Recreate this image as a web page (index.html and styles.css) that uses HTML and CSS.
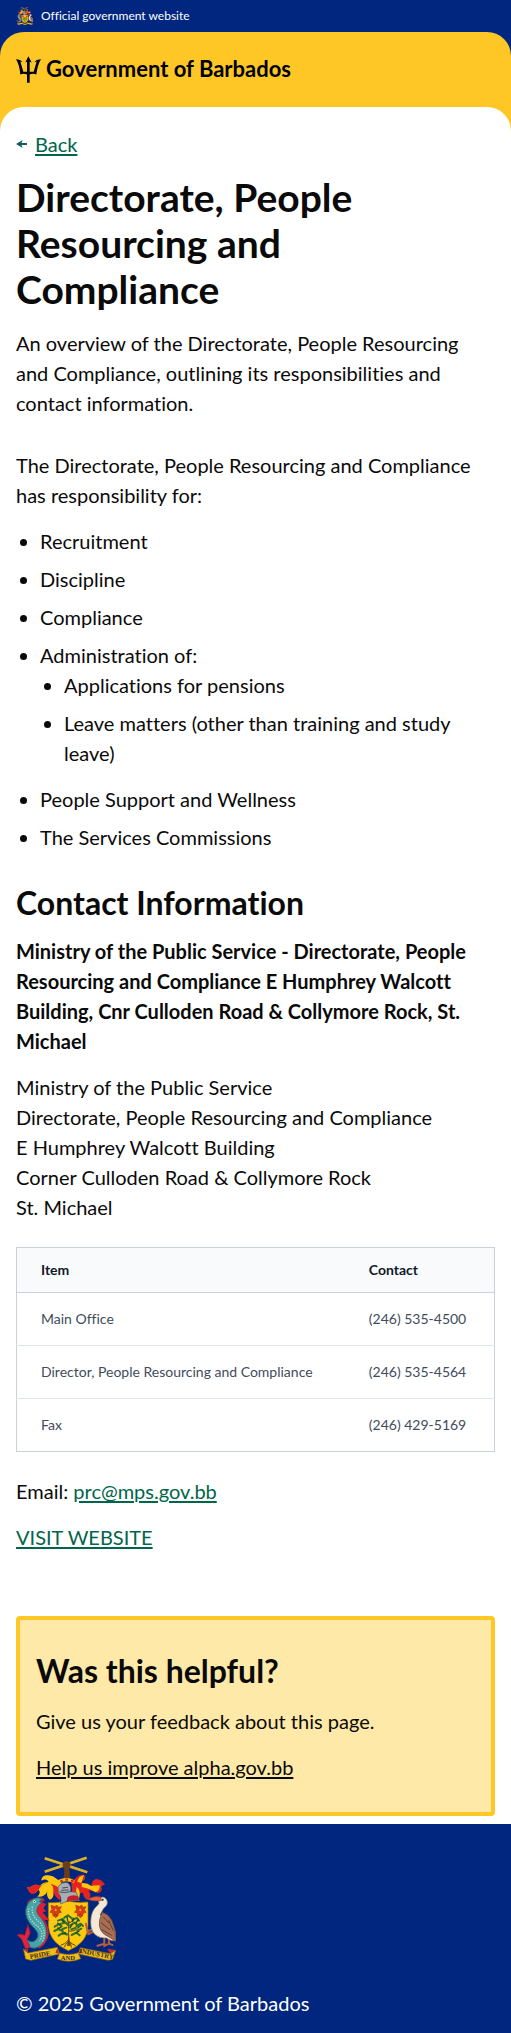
FILE: index.html
```html
<!DOCTYPE html>
<html lang="en">
<head>
<meta charset="utf-8">
<meta name="viewport" content="width=device-width, initial-scale=1">
<title>Directorate, People Resourcing and Compliance</title>
<link rel="stylesheet" href="styles.css">
</head>
<body>
<svg class="symbols" aria-hidden="true">
  <symbol id="crest" viewBox="48 50 300 318">
    <!-- crossed sugar cane and hand -->
    <path d="M134 97 260 55M134 57 262 99" stroke="#e0b423" stroke-width="8"/>
    <path d="M136 96 258 56M137 60 259 98" stroke="#6b5110" stroke-width="2" stroke-dasharray="1 9"/>
    <path d="M191 120 193 90Q184 80 190 69L198 65 209 68Q215 76 208 88L210 120Z" fill="#6a3e1d"/>
    <!-- mantling -->
    <path d="M184 128C166 118 160 105 137 108Q124 112 124 124Q139 116 146 128Q128 128 120 140Q104 132 94 142L81 144Q92 161 105 162L116 151Q124 160 112 172Q132 175 142 157Q138 170 149 181Q163 177 160 158Q171 166 184 157Z" fill="#fcc60c"/>
    <path d="M145 128Q126 132 116 151L105 162Q88 170 81 144L94 142Q104 130 120 140ZM151 133Q162 140 160 158Q166 174 180 183L183 151Q170 137 151 133Z" fill="#e32423"/>
    <path d="M214 128C231 118 231 104 252 107Q258 110 254 121Q248 124 244 131Q262 130 274 140Q274 123 288 119Q307 119 315 137Q299 138 306 149Q301 165 287 159Q274 153 266 154Q279 174 261 181Q249 174 249 160Q232 160 235 181L217 177Z" fill="#e32423"/>
    <path d="M252 107Q235 111 232 127L244 131ZM245 143Q264 146 287 159Q300 155 299 138Q280 138 274 140Q262 130 245 131ZM230 143Q244 151 237 179L226 174Z" fill="#fcc60c"/>
    <path d="M174 122Q200 109 224 123L222 131Q198 121 175 131Z" fill="#fcc60c"/>
    <path d="M181 125h7m8-4h8m9 4h8" stroke="#e32423" stroke-width="7"/>
    <!-- shield -->
    <path d="M145 190Q168 192 200 185Q234 192 264 188V258Q264 310 205 334Q148 310 145 258Z" fill="#fcc90e" stroke="#9a7411" stroke-width="2"/>
    <!-- helmet -->
    <path d="M174 143Q184 126 205 131Q216 144 211 157L229 159 238 184Q206 181 182 194Q186 172 175 161Z" fill="#a9adb4" stroke="#555b63" stroke-width="2"/>
    <path d="M178 158Q194 162 211 157M186 146l18-2M184 153l22-1" fill="none" stroke="#4b5059" stroke-width="3"/>
    <path d="M203 173Q218 164 234 171L238 184Q211 181 199 188Z" fill="#c5202a"/>
    <!-- flowers -->
    <g id="flower" fill="#df3b18" stroke="#9e3213" stroke-width="2">
      <path d="M153 198l12 4 5-5 6 7 8-2-5 9 5 8-8 2-3 9-7-5-7 6-1-11-8-1 6-9ZM162 230l5-8 6 8-6 5Z"/>
      <circle cx="167" cy="212" r="5" fill="#f4a01c"/>
    </g>
    <use href="#flower" x="74"/>
    <!-- bearded fig tree -->
    <path d="M201 320Q208 285 202 246L209 245Q204 284 212 319Z" fill="#68461a"/>
    <path d="M205 302Q195 315 182 318M205 304Q216 315 227 319M204 308Q195 316 193 324M207 307Q215 316 214 325M205 285Q184 278 172 263M206 275Q227 278 238 260M205 257Q188 252 182 239M206 251Q223 246 226 237" fill="none" stroke="#68461a" stroke-width="3"/>
    <path d="M164 262l13-8 8 7M163 275l12-6 13 6M176 289l12-8 13 5M215 287l14-7 10 8M232 274l12-6M229 261l13-8 7 7M174 244l14-5 6 8M193 235l11-7 10 8M217 241l14-5 6 8M183 253l14-4 8 9M211 259l12-9 10 7M187 269l12-4M214 270l12-4" fill="none" stroke="#2f7130" stroke-width="6" stroke-linejoin="round" stroke-linecap="round"/>
    <path d="M172 250l8 8m5-18 8 9m8-18 2 14m17-10-3 13m18-8-8 12m16 6-10 8m-49-4-11 7m43-14-7 12m29 8-12 7m-41 2 13-4" stroke="#174f2b" stroke-width="4"/>
    <!-- dolphin fish -->
    <path d="M81 190Q91 174 113 176Q131 171 134 185L124 188 139 194 130 207 139 216 128 219 149 244 123 239 132 257 117 252Q92 234 99 205Z" fill="#d91f35"/>
    <path d="M100 179Q117 170 127 181L118 186 126 191Q105 204 113 223Q139 249 141 280Q139 315 111 325Q92 331 79 315Q68 304 71 287Q92 319 108 301Q124 286 98 262Q75 239 77 212Q80 189 100 179Z" fill="#47a4a6" stroke="#235c74" stroke-width="3"/>
    <path d="M87 207Q79 236 112 260Q136 280 118 305M97 202Q93 230 120 250Q140 275 128 306" fill="none" stroke="#c8ddd0" stroke-width="4" stroke-dasharray="4 4"/>
    <path d="M126 192Q107 205 114 223Q142 249 144 280Q141 312 116 325" fill="none" stroke="#d91f35" stroke-width="5"/>
    <path d="M51 286Q64 282 74 288L84 255 91 281 81 301 91 325 76 328 65 300Z" fill="#dd2440" stroke="#8c1933" stroke-width="2"/>
    <circle cx="103" cy="187" r="4" fill="#fff"/><circle cx="103" cy="187" r="2" fill="#111"/>
    <!-- pelican -->
    <path d="M283 276 265 284 257 251M265 275l16-6M313 291v22l-23 7M326 290l1 23-17 8M327 313l13 5" fill="none" stroke="#b65f3c" stroke-width="6"/>
    <path d="M295 181Q309 165 320 181Q327 195 311 207L300 227Q349 238 348 305Q331 305 319 296Q280 297 273 262Q269 229 283 208L297 193Z" fill="#f4e8d7" stroke="#8e7260" stroke-width="2"/>
    <path d="M306 219Q345 227 348 306L325 292Q292 277 299 241Z" fill="#a66d51" stroke="#614136" stroke-width="2"/>
    <path d="M310 233l17 18m-24-1 27 21m-25 0 30 17m-9-45 14 31" stroke="#623f36" stroke-width="3"/>
    <path d="M262 180Q282 168 302 173L304 184Q281 187 262 180Z" fill="#e66239" stroke="#9d402c" stroke-width="2"/>
    <circle cx="308" cy="181" r="3" fill="#223"/>
    <!-- ribbon -->
    <path d="M70 329 84 341 172 324 178 341Q206 350 236 340L241 325 331 343 347 332 338 360 325 363 236 344 242 358Q207 373 172 359L178 344 93 363 77 359Z" fill="#efbd18" stroke="#8c681b" stroke-width="2"/>
    <path d="M172 325 178 344 166 340ZM241 325 247 340 236 344ZM70 329 84 341 84 330ZM331 343 347 332 322 328Z" fill="#c5302a"/>
  </symbol>
</svg>

<div class="official">
  <svg class="official-crest" aria-hidden="true"><use href="#crest"/></svg>
  <span>Official government website</span>
</div>

<div class="masthead-back">
  <header class="masthead">
    <a class="brand" href="#">
      <svg class="trident" viewBox="0 0 75 80" aria-hidden="true">
        <path d="M37 0 47 19 41 17V47H53L62 16 55 18Q61 9 75 9Q65 24 61 55Q51 51 41 55V80H33V55Q23 51 13 55Q10 24 0 9Q13 9 20 18L13 16 22 47H33V17L28 19Z"/>
      </svg>
      <span>Government of Barbados</span>
    </a>
  </header>
</div>

<div class="content-back">
  <main class="content">
    <nav class="back">
      <svg class="arrow" viewBox="0 0 30 22" aria-hidden="true"><path d="M0 11 18 0 15 8H30V14H15L18 22Z"/></svg>
      <a href="#">Back</a>
    </nav>
    <h1>Directorate, People Resourcing and Compliance</h1>
    <p class="lead">An overview of the Directorate, People Resourcing and Compliance, outlining its responsibilities and contact information.</p>
    <p>The Directorate, People Resourcing and Compliance has responsibility for:</p>
    <ul>
      <li>Recruitment</li>
      <li>Discipline</li>
      <li>Compliance</li>
      <li>Administration of:
        <ul>
          <li>Applications for pensions</li>
          <li>Leave matters (other than training and study leave)</li>
        </ul>
      </li>
      <li>People Support and Wellness</li>
      <li>The Services Commissions</li>
    </ul>
    <h2 class="contact-title">Contact Information</h2>
    <p><strong>Ministry of the Public Service - Directorate, People Resourcing and Compliance E Humphrey Walcott Building, Cnr Culloden Road &amp; Collymore Rock, St. Michael</strong></p>
    <p>Ministry of the Public Service<br>Directorate, People Resourcing and Compliance<br>E Humphrey Walcott Building<br>Corner Culloden Road &amp; Collymore Rock<br>St. Michael</p>
    <table>
      <thead>
        <tr><th scope="col">Item</th><th scope="col">Contact</th></tr>
      </thead>
      <tbody>
        <tr><td>Main Office</td><td>(246) 535-4500</td></tr>
        <tr><td>Director, People Resourcing and Compliance</td><td>(246) 535-4564</td></tr>
        <tr><td>Fax</td><td>(246) 429-5169</td></tr>
      </tbody>
    </table>
    <p>Email: <a href="mailto:prc@mps.gov.bb">prc@mps.gov.bb</a></p>
    <p><a href="#">VISIT WEBSITE</a></p>
    <section class="feedback">
      <h2>Was this helpful?</h2>
      <p>Give us your feedback about this page.</p>
      <p><a href="#">Help us improve alpha.gov.bb</a></p>
    </section>
  </main>
</div>

<footer class="footer">
  <svg class="footer-crest" viewBox="48 50 300 318" role="img" aria-label="Coat of arms of Barbados">
    <use href="#crest" x="48" y="50" width="300" height="318"/>
    <g class="motto">
      <text x="91" y="359" transform="rotate(-11 91 359)">PRIDE</text>
      <text x="182" y="362">AND</text>
      <text x="238" y="340" transform="rotate(11 238 340)">INDUSTRY</text>
    </g>
  </svg>
  <p>© 2025 Government of Barbados</p>
</footer>
</body>
</html>
```
FILE: styles.css
```css
:root {
  --blue: #00267f;
  --yellow: #ffc726;
  --green: #00654a;
  --ink: #0a0a0a;
}

* { box-sizing: border-box; }

body {
  margin: 0;
  color: var(--ink);
  font: 20px/30px Lato, "Liberation Sans", sans-serif;
  font-variant-ligatures: none;
}

h1, h2, p, ul { margin: 0; }

a {
  color: var(--green);
  text-decoration-thickness: 2px;
  text-underline-offset: 2px;
}

.symbols {
  position: absolute;
  width: 0;
  height: 0;
}

.official {
  display: flex;
  align-items: center;
  gap: 8px;
  height: 32px;
  padding: 0 16px;
  background: var(--blue);
  color: #fff;
  font-size: 12px;
  line-height: 16px;
}

.official-crest { width: 17px; height: 18px; }

.masthead-back { background: var(--blue); }

.masthead {
  padding: 22px 16px 23px;
  border-radius: 24px 24px 0 0;
  background: var(--yellow);
}

.brand {
  display: flex;
  align-items: center;
  gap: 5px;
  color: #000;
  font-size: 22px;
  font-weight: 700;
  text-decoration: none;
}

.trident { width: 25px; height: 27px; }

.content-back { background: var(--yellow); }

.content {
  padding: 22px 16px 8px;
  border-radius: 24px 24px 0 0;
  background: #fff;
}

.back {
  display: flex;
  align-items: center;
  gap: 8px;
  margin-bottom: 15px;
}

.arrow {
  width: 11px;
  height: 8px;
  fill: #0e5f64;
}

h1 {
  max-width: 440px;
  margin-bottom: 16px;
  font-size: 39px;
  line-height: 46px;
}

h2 {
  margin-bottom: 16px;
  font-size: 32px;
  line-height: 38px;
}

p { margin-bottom: 16px; }

.lead { margin-bottom: 32px; }

ul {
  padding-left: 24px;
  list-style: disc;
}

li { margin-bottom: 8px; }

li > ul { margin-bottom: 16px; }

.contact-title { margin-top: 32px; margin-bottom: 14px; }

table {
  width: 100%;
  margin: 25px 0 24px;
  border: 1px solid #cad1d9;
  border-collapse: collapse;
  font-size: 14px;
  line-height: 20px;
  text-align: left;
}

thead { background: #f9fafb; }

thead tr { border-bottom: 1px solid #cad1d9; }

th {
  padding: 12px 24px;
  color: #101828;
  font-weight: 700;
}

td {
  padding: 16px 24px;
  color: #414b5c;
}

tbody tr + tr { border-top: 1px solid #e1e4e8; }

td:last-child { white-space: nowrap; }

.feedback {
  margin-top: 64px;
  padding: 32px 16px 14px;
  border: 4px solid var(--yellow);
  border-radius: 4px;
  background: #ffe9a8;
}

.feedback a { color: var(--ink); }

.footer {
  padding: 32px 16px 15px;
  background: var(--blue);
  color: #fff;
}

.footer p { margin: 0; }

.footer-crest {
  display: block;
  width: 100px;
  height: 106px;
  margin-bottom: 26px;
}

.motto {
  fill: #3a2b10;
  font: 700 20px "Liberation Serif", serif;
}
```
